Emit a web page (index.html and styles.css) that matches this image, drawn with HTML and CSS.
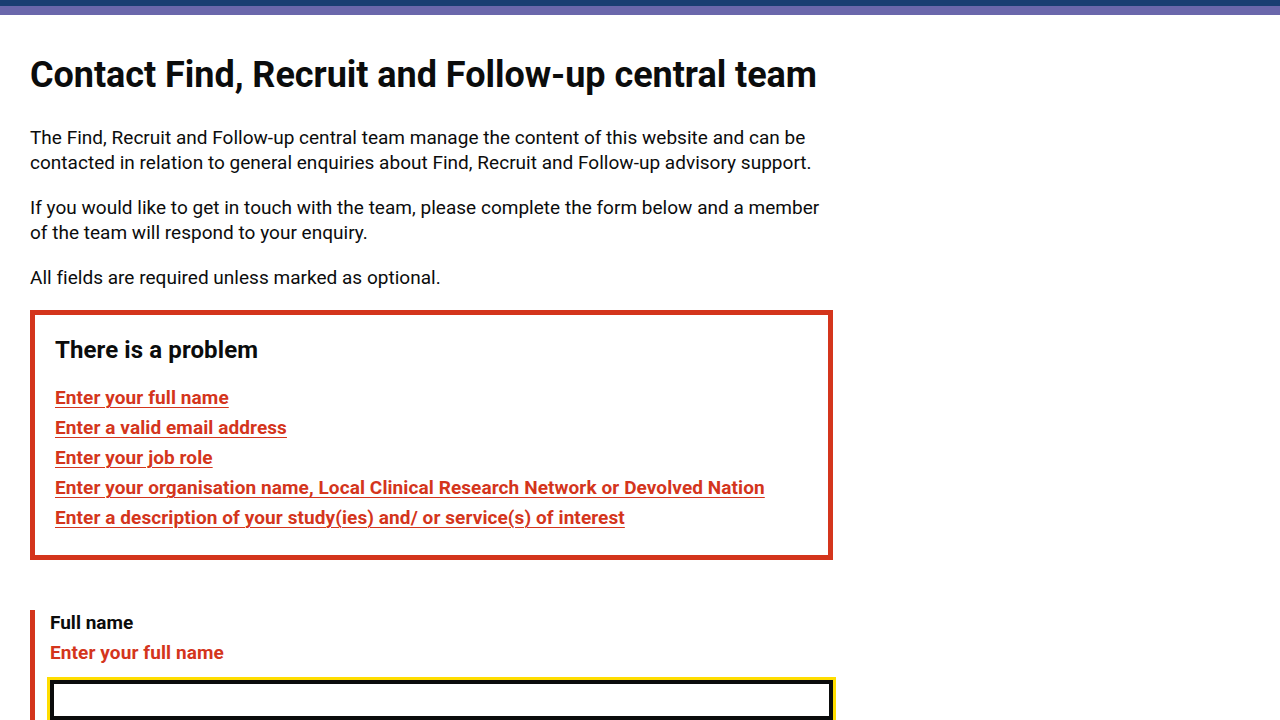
FILE: index.html
```html
<!DOCTYPE html>
<html lang="en">
<head>
<meta charset="utf-8">
<title>Contact Find, Recruit and Follow-up central team</title>
<link rel="stylesheet" href="styles.css">
</head>
<body>
<header class="topbar">
  <div class="topbar-dark"></div>
  <div class="topbar-purple"></div>
</header>
<main class="main">
  <div class="column">
    <h1 class="heading-l">Contact Find, Recruit and Follow-up central team</h1>
    <p class="body">The Find, Recruit and Follow-up central team manage the content of this website and can be contacted in relation to general enquiries about Find, Recruit and Follow-up advisory support.</p>
    <p class="body">If you would like to get in touch with the team, please complete the form below and a member of the team will respond to your enquiry.</p>
    <p class="body">All fields are required unless marked as optional.</p>

    <div class="error-summary">
      <h2 class="error-summary-title">There is a problem</h2>
      <ul class="error-list">
        <li><a href="#fullName">Enter your full name</a></li>
        <li><a href="#email">Enter a valid email address</a></li>
        <li><a href="#jobRole">Enter your job role</a></li>
        <li><a href="#org">Enter your organisation name, Local Clinical Research Network or Devolved Nation</a></li>
        <li><a href="#desc">Enter a description of your study(ies) and/ or service(s) of interest</a></li>
      </ul>
    </div>

    <div class="form-group form-group-error">
      <label class="label" for="fullName">Full name</label>
      <p class="error-message">Enter your full name</p>
      <input class="input input-focused" id="fullName" type="text" autofocus>
    </div>
  </div>
</main>
</body>
</html>
```
FILE: styles.css
```css
* { box-sizing: border-box; }
html, body { margin: 0; padding: 0; background: #fff; }
body {
  font-family: Roboto, "Liberation Sans", Arial, sans-serif;
  color: #0b0c0c;
}
.topbar-dark { height: 6px; background: #193e72; }
.topbar-purple { height: 9px; background: #6a67ab; }
.main { padding: 40px 30px 0; }
.column { width: 803px; }
.heading-l {
  font-size: 36px;
  line-height: 40px;
  font-weight: 700;
  letter-spacing: -0.04px;
  margin: 0 0 30px;
}
.body {
  font-size: 19px;
  line-height: 25px;
  letter-spacing: 0.02px;
  margin: 0 0 20px;
}
.error-summary {
  border: 5px solid #d4351c;
  padding: 20px;
  margin-bottom: 50px;
}
.error-summary-title {
  font-size: 24px;
  line-height: 30px;
  font-weight: 700;
  letter-spacing: 0.1px;
  margin: 0 0 20px;
}
.error-list { list-style: none; margin: 0; padding: 0; }
.error-list li {
  font-size: 19px;
  line-height: 25px;
  font-weight: 700;
  letter-spacing: 0.09px;
  margin-bottom: 5px;
}
.error-list a {
  color: #d4351c;
  text-decoration: underline;
  text-decoration-thickness: 1px;
  text-underline-offset: 3px;
}
.form-group-error {
  border-left: 5px solid #d4351c;
  padding-left: 15px;
}
.label {
  display: block;
  font-size: 19px;
  line-height: 25px;
  font-weight: 700;
  margin-bottom: 5px;
}
.error-message {
  font-size: 19px;
  line-height: 25px;
  font-weight: 700;
  letter-spacing: 0.1px;
  color: #d4351c;
  margin: 0 0 15px;
}
.input {
  display: block;
  width: 100%;
  height: 40px;
  padding: 5px;
  font-family: inherit;
  font-size: 19px;
  border: 2px solid #0b0c0c;
  border-radius: 0;
  background: #fff;
}
.input-focused, .input:focus {
  outline: 3px solid #ffdd00;
  outline-offset: 0;
  box-shadow: inset 0 0 0 2px #0b0c0c;
}
```
